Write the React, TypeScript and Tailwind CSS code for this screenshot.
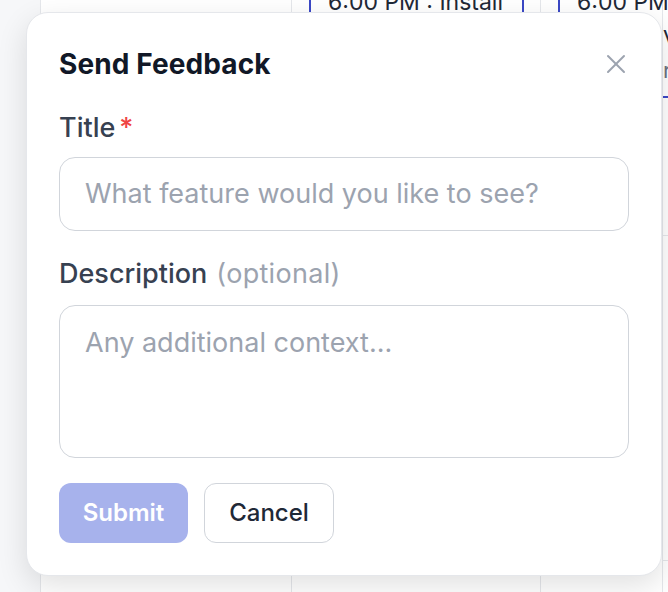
import React from "react";
import { X } from "lucide-react";

export default function App() {
  const font = { fontFamily: "Inter, 'Noto Sans', sans-serif" };
  return (
    <div className="relative w-[668px] h-[592px] overflow-hidden bg-white" style={font}>
      {/* background calendar */}
      <div className="flex h-full">
        <div className="w-[41px] shrink-0 bg-[#f6f7f9] border-r border-[#e5e7eb]" />
        <div className="w-[251px] shrink-0 border-r border-[#e5e7eb]" />
        <div className="w-[249px] shrink-0 border-r border-[#e5e7eb] pl-[17px]">
          <div className="w-[215px] h-[40px] -mt-[13px] border-x-2 border-[#3b48c6] pl-[17px] text-[23px] leading-[30px] text-[#1f2937] whitespace-nowrap">
            6:00 PM : Install
          </div>
        </div>
        <div className="w-[122px] shrink-0 border-r border-[#e5e7eb] pl-[17px]">
          <div className="h-[40px] -mt-[13px] border-l-2 border-[#3b48c6] pl-[17px] text-[23px] leading-[30px] text-[#1f2937] whitespace-nowrap">
            6:00 PM
          </div>
        </div>
        <div className="flex-1 flex flex-col h-[561px] border-b border-[#e5e7eb]">
          <div className="pt-[22px] text-[22px] leading-[32px] text-[#1f2937] whitespace-nowrap">Vo</div>
          <div className="text-[22px] leading-[32px] text-[#6b7280] whitespace-nowrap">re</div>
          <div className="mt-[10px] h-[2px] bg-[#3b48c6]" />
          <div className="h-[138px] border-b border-[#e5e7eb]" />
        </div>
      </div>

      {/* dialog */}
      <div className="absolute left-[26px] top-[12px] w-[636px] h-[564px] rounded-[22px] border border-[#e5e7eb] bg-white shadow-[0_10px_30px_rgba(0,0,0,0.12)] px-8 pt-8 pb-8 flex flex-col">
        <div className="h-[38px] flex items-center justify-between">
          <h2 className="text-[28px] font-bold text-[#111827] tracking-[0.1px]">Send Feedback</h2>
          <X size={32} strokeWidth={1.5} className="text-[#9ca3af] -mr-[3px]" />
        </div>

        <div className="mt-[28px] h-[34px] flex items-center text-[27px] font-medium text-[#374151]">
          Title<span className="ml-[4px] text-[#ef4444]">*</span>
        </div>
        <div className="mt-[12px] h-[74px] rounded-[16px] border-[1.5px] border-[#d1d5db] flex items-center px-[25px] text-[27px] text-[#9ca3af] whitespace-nowrap">
          What feature would you like to see?
        </div>

        <div className="mt-[27px] h-[34px] flex items-center text-[27px] font-medium text-[#374151]">
          Description<span className="ml-[9px] font-normal text-[#9ca3af] tracking-[0.3px]">(optional)</span>
        </div>
        <div className="mt-[13px] h-[154px] rounded-[16px] border-[1.5px] border-[#d1d5db] px-[25px] pt-[21px] text-[27px] leading-[32px] text-[#9ca3af]">
          Any additional context...
        </div>

        <div className="mt-[25px] flex gap-[16px]">
          <button className="h-[60px] w-[129px] rounded-[12px] bg-[#a7b2ec] text-white text-[24px] font-semibold">
            Submit
          </button>
          <button className="h-[60px] w-[130px] rounded-[12px] border-[1.5px] border-[#d1d5db] bg-white text-[#1f2937] text-[24px] font-medium">
            Cancel
          </button>
        </div>
      </div>
    </div>
  );
}
